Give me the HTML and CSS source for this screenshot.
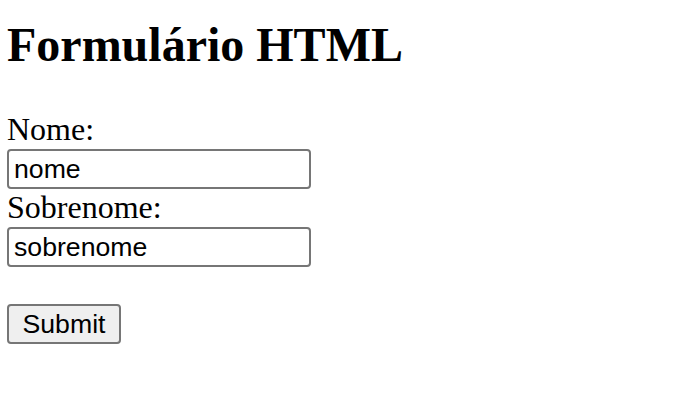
FILE: index.html
```html
<!DOCTYPE html>
<html lang="pt">
<head>
<meta charset="utf-8">
<title>Formulário HTML</title>
<link rel="stylesheet" href="styles.css">
</head>
<body>
<div class="page">
  <h2 class="title">Formulário HTML</h2>
  <form class="form">
    <div class="label">Nome:</div>
    <input class="field" type="text" name="nome" value="nome">
    <div class="label">Sobrenome:</div>
    <input class="field" type="text" name="sobrenome" value="sobrenome">
    <div class="spacer"></div>
    <button class="submit" type="submit">Submit</button>
  </form>
</div>
</body>
</html>
```
FILE: styles.css
```css
html, body {
  margin: 0;
  padding: 0;
  background: #ffffff;
}

.page {
  padding: 0 7px;
  font-family: "Liberation Serif", "Times New Roman", serif;
  color: #000000;
}

.title {
  font-size: 48px;
  font-weight: bold;
  line-height: 55px;
  margin: 17px 0 39px 0;
}

.form {
  display: flex;
  flex-direction: column;
  align-items: flex-start;
  margin: 0;
}

.label {
  font-size: 32px;
  line-height: 37px;
  height: 37px;
}

.field {
  box-sizing: border-box;
  width: 304px;
  height: 40px;
  margin: 1px 0 0 0;
  padding: 0 5px;
  border: 2px solid #767676;
  border-radius: 4px;
  font-family: "Liberation Sans", Arial, sans-serif;
  font-size: 26.67px;
  color: #000000;
  background: #ffffff;
  outline: none;
}

.spacer {
  height: 37px;
}

.submit {
  box-sizing: border-box;
  width: 114px;
  height: 40px;
  margin: 0;
  padding: 0 13px;
  border: 2px solid #767676;
  border-radius: 4px;
  background: #efefef;
  font-family: "Liberation Sans", Arial, sans-serif;
  font-size: 26.67px;
  color: #000000;
}
```
